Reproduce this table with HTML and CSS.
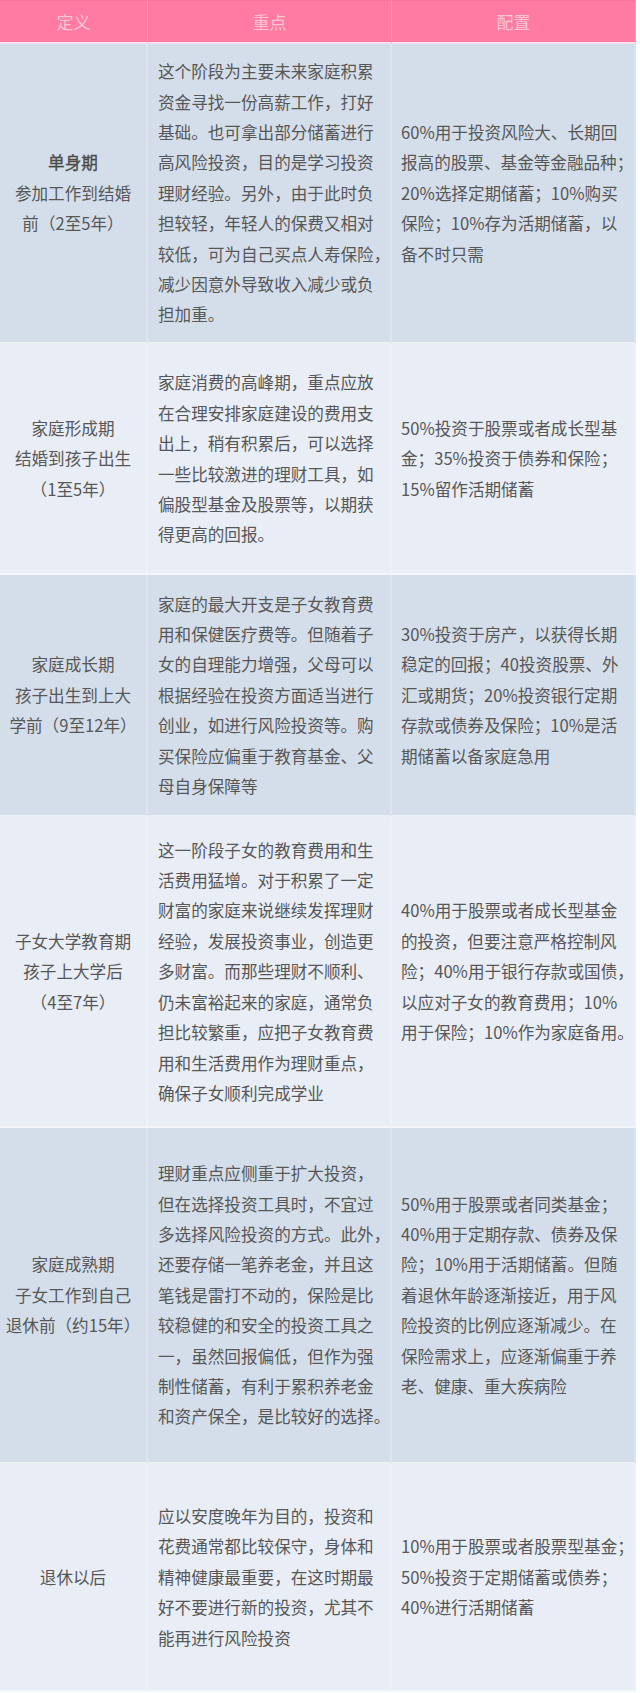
FILE: index.html
```html
<!DOCTYPE html>
<html lang="zh-CN">
<head>
<meta charset="utf-8">
<title>家庭理财阶段配置</title>
<link rel="stylesheet" href="styles.css">
</head>
<body>
<table class="plan">
  <colgroup>
    <col class="col-def">
    <col class="col-key">
    <col class="col-alloc">
  </colgroup>
  <thead>
    <tr class="head-row">
      <th>定义</th>
      <th>重点</th>
      <th>配置</th>
    </tr>
  </thead>
  <tbody>
    <tr class="row row-1 odd">
      <td class="def"><span class="stage">单身期</span><br>参加工作到结婚<br>前（2至5年）</td>
      <td class="key">这个阶段为主要未来家庭积累<br>资金寻找一份高薪工作，打好<br>基础。也可拿出部分储蓄进行<br>高风险投资，目的是学习投资<br>理财经验。另外，由于此时负<br>担较轻，年轻人的保费又相对<br>较低，可为自己买点人寿保险，<br>减少因意外导致收入减少或负<br>担加重。</td>
      <td class="alloc">60%用于投资风险大、长期回<br>报高的股票、基金等金融品种；<br>20%选择定期储蓄；10%购买<br>保险；10%存为活期储蓄，以<br>备不时只需</td>
    </tr>
    <tr class="row row-2 even">
      <td class="def">家庭形成期<br>结婚到孩子出生<br>（1至5年）</td>
      <td class="key">家庭消费的高峰期，重点应放<br>在合理安排家庭建设的费用支<br>出上，稍有积累后，可以选择<br>一些比较激进的理财工具，如<br>偏股型基金及股票等，以期获<br>得更高的回报。</td>
      <td class="alloc">50%投资于股票或者成长型基<br>金；35%投资于债券和保险；<br>15%留作活期储蓄</td>
    </tr>
    <tr class="row row-3 odd">
      <td class="def">家庭成长期<br>孩子出生到上大<br>学前（9至12年）</td>
      <td class="key">家庭的最大开支是子女教育费<br>用和保健医疗费等。但随着子<br>女的自理能力增强，父母可以<br>根据经验在投资方面适当进行<br>创业，如进行风险投资等。购<br>买保险应偏重于教育基金、父<br>母自身保障等</td>
      <td class="alloc">30%投资于房产，以获得长期<br>稳定的回报；40投资股票、外<br>汇或期货；20%投资银行定期<br>存款或债券及保险；10%是活<br>期储蓄以备家庭急用</td>
    </tr>
    <tr class="row row-4 even">
      <td class="def">子女大学教育期<br>孩子上大学后<br>（4至7年）</td>
      <td class="key">这一阶段子女的教育费用和生<br>活费用猛增。对于积累了一定<br>财富的家庭来说继续发挥理财<br>经验，发展投资事业，创造更<br>多财富。而那些理财不顺利、<br>仍未富裕起来的家庭，通常负<br>担比较繁重，应把子女教育费<br>用和生活费用作为理财重点，<br>确保子女顺利完成学业</td>
      <td class="alloc">40%用于股票或者成长型基金<br>的投资，但要注意严格控制风<br>险；40%用于银行存款或国债，<br>以应对子女的教育费用；10%<br>用于保险；10%作为家庭备用。</td>
    </tr>
    <tr class="row row-5 odd">
      <td class="def">家庭成熟期<br>子女工作到自己<br>退休前（约15年）</td>
      <td class="key">理财重点应侧重于扩大投资，<br>但在选择投资工具时，不宜过<br>多选择风险投资的方式。此外，<br>还要存储一笔养老金，并且这<br>笔钱是雷打不动的，保险是比<br>较稳健的和安全的投资工具之<br>一，虽然回报偏低，但作为强<br>制性储蓄，有利于累积养老金<br>和资产保全，是比较好的选择。</td>
      <td class="alloc">50%用于股票或者同类基金；<br>40%用于定期存款、债券及保<br>险；10%用于活期储蓄。但随<br>着退休年龄逐渐接近，用于风<br>险投资的比例应逐渐减少。在<br>保险需求上，应逐渐偏重于养<br>老、健康、重大疾病险</td>
    </tr>
    <tr class="row row-6 even">
      <td class="def">退休以后</td>
      <td class="key">应以安度晚年为目的，投资和<br>花费通常都比较保守，身体和<br>精神健康最重要，在这时期最<br>好不要进行新的投资，尤其不<br>能再进行风险投资</td>
      <td class="alloc">10%用于股票或者股票型基金；<br>50%投资于定期储蓄或债券；<br>40%进行活期储蓄</td>
    </tr>
  </tbody>
</table>
</body>
</html>
```

FILE: styles.css
```css
html, body {
  margin: 0;
  padding: 0;
  background: #ffffff;
}

body {
  font-family: "Noto Sans CJK SC", "Noto Sans", sans-serif;
  color: #575757;
}

.plan {
  width: 636px;
  table-layout: fixed;
  border-collapse: separate;
  border-spacing: 0;
}

.col-def { width: 148px; }
.col-key { width: 244px; }
.col-alloc { width: 244px; }

.head-row {
  height: 44px;
}

.head-row th {
  background: #ff7ba1;
  color: #ffc4d6;
  font-size: 17px;
  font-weight: 400;
  line-height: 20px;
  padding: 0;
  border-top: 1px solid #f6769c;
  border-right: 1px solid #ff93b3;
  border-bottom: 2px solid #f6e1ec;
  text-align: center;
  vertical-align: middle;
}

.plan td {
  padding: 0;
  font-size: 16.6px;
  line-height: 30.4px;
  white-space: nowrap;
  vertical-align: middle;
  border-right: 2px solid rgba(255, 255, 255, 0.2);
  border-bottom: 2px solid rgba(255, 255, 255, 0.55);
}

.odd td { background-color: #d4deea; }
.even td { background-color: #e8edf6; }

.def {
  text-align: center;
}

.stage {
  color: #4a4a4a;
  -webkit-text-stroke: 0.35px #4a4a4a;
}

.key {
  padding-left: 10px !important;
  text-align: left;
}

.alloc {
  padding-left: 9px !important;
  text-align: left;
}

.row-1 { height: 300px; }
.row-2 { height: 231px; }
.row-3 { height: 242px; }
.row-4 { height: 311px; }
.row-5 { height: 336px; }
.row-6 { height: 228px; }
```
